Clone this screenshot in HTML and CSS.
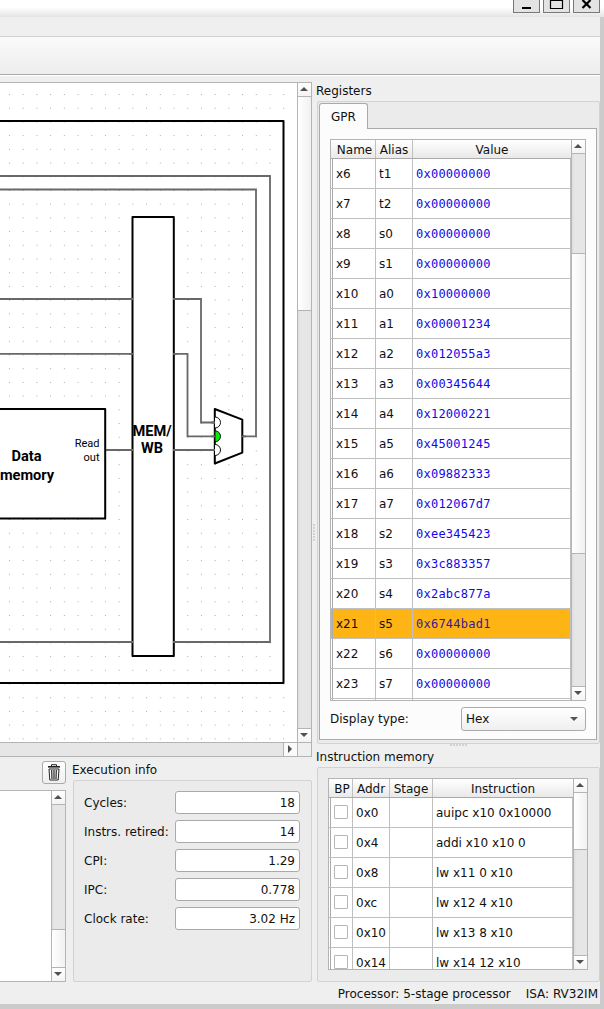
FILE: index.html
```html
<!DOCTYPE html>
<html lang="en">
<head>
<meta charset="utf-8">
<title>Processor simulator</title>
<link rel="stylesheet" href="styles.css">
</head>
<body>
<div class="window">
  <header class="titlebar">
    <span class="winbtn"><svg width="25" height="12"><path d="M8 8h9" stroke="#000" stroke-width="2"/></svg></span>
    <span class="winbtn"><svg width="25" height="12"><path d="M6.500 -1v9.500h12V-1M6 0.500h13" fill="none" stroke="#000" stroke-width="1.200"/></svg></span>
    <span class="winbtn"><svg width="25" height="12"><path d="M8.500 0l8 8M16.500 0l-8 8" stroke="#000" stroke-width="2.200"/></svg></span>
  </header>
  <div class="menubar"></div>
  <div class="toolbar"></div>
  <main class="workspace">
    <section class="left">
      <div class="canvas">
        <svg class="scheme" width="297" height="659" viewBox="0 83 297 659">
          <defs><pattern id="dots" x="9" y="94" width="13.71" height="13.71" patternUnits="userSpaceOnUse"><rect width="1" height="1" fill="#a8a8a8"/></pattern></defs>
          <rect x="0" y="92" width="285" height="650" fill="url(#dots)"/>
          <path d="M-2 121H283.500V683H-2" class="block open"/>
          <g class="wire">
            <path d="M0 176H270V642H0"/>
            <path d="M0 189.500H256V436.300H242"/>
            <path d="M0 299H201V422.500H215"/>
            <path d="M0 353.800H187.500V436.300H215"/>
            <path d="M105 450H215"/>
          </g>
          <rect x="132.500" y="217" width="41.300" height="439" class="block"/>
          <path d="M-2 409H105.200V518.500H-2" class="block"/>
          <path class="wire" d="M129 299h4M129 353.800h4M129 450h4M129 642h4M173 299h4M173 353.800h4M173 450h4M173 642h4"/>
          <path d="M214.800 409L242.300 419.600V452.600L214.800 463.500Z" class="block"/>
          <g class="port">
            <path d="M215 417a5.500 5.500 0 0 1 0 11"/>
            <path class="active" d="M215 430.800a5.500 5.500 0 0 1 0 11z"/>
            <path d="M215 444.500a5.500 5.500 0 0 1 0 11"/>
          </g>
          <path class="wire" d="M211 422.500h4M211 436.300h4M211 450h4M242 436.300h4"/>
          <g class="name">
            <text x="152" y="436">MEM/</text><text x="152" y="453">WB</text>
            <text x="26.500" y="461">Data</text><text x="27" y="480">memory</text>
          </g>
          <g class="pin"><text x="99.500" y="447">Read</text><text x="99.500" y="461">out</text></g>
        </svg>
        <div class="vscroll"><i class="btn up"></i><i class="thumb grow214"></i><i class="track"></i><i class="btn down"></i></div>
        <div class="hscroll"><i class="btn right-arrow"></i></div>
        <div class="corner"></div>
      </div>
      <div class="lower">
        <div class="console">
          <div class="trash"><svg width="14" height="17" viewBox="0 0 14 17"><path d="M4.500 2V.7h5V2" fill="none" stroke="#222"/><path d="M1 2.800h12" stroke="#222" stroke-width="1.600"/><path d="M2 5l.8 11h8.400L12 5z" fill="#fff" stroke="#222"/><path d="M4.700 6l.3 9M7 6v9M9.300 6l-.3 9" stroke="#222" stroke-width="1.200"/></svg></div>
          <div class="output"><div class="vscroll"><i class="btn up"></i><i class="track"></i><i class="thumb grow37"></i><i class="btn down"></i></div></div>
        </div>
        <div class="exec">
          <h2>Execution info</h2>
          <div class="group">
            <span>Cycles:</span><b>18</b>
            <span>Instrs. retired:</span><b>14</b>
            <span>CPI:</span><b>1.29</b>
            <span>IPC:</span><b>0.778</b>
            <span>Clock rate:</span><b>3.02 Hz</b>
          </div>
        </div>
      </div>
    </section>
    <div class="splitter"></div>
    <section class="right">
      <h2>Registers</h2>
      <div class="group regs">
        <div class="tab">GPR</div>
        <div class="pane">
          <div class="table">
            <div class="rows">
              <div class="row head"><span>Name</span><span>Alias</span><span>Value</span></div>
              <div class="row"><span>x6</span><span>t1</span><code>0x00000000</code></div>
              <div class="row"><span>x7</span><span>t2</span><code>0x00000000</code></div>
              <div class="row"><span>x8</span><span>s0</span><code>0x00000000</code></div>
              <div class="row"><span>x9</span><span>s1</span><code>0x00000000</code></div>
              <div class="row"><span>x10</span><span>a0</span><code>0x10000000</code></div>
              <div class="row"><span>x11</span><span>a1</span><code>0x00001234</code></div>
              <div class="row"><span>x12</span><span>a2</span><code>0x012055a3</code></div>
              <div class="row"><span>x13</span><span>a3</span><code>0x00345644</code></div>
              <div class="row"><span>x14</span><span>a4</span><code>0x12000221</code></div>
              <div class="row"><span>x15</span><span>a5</span><code>0x45001245</code></div>
              <div class="row"><span>x16</span><span>a6</span><code>0x09882333</code></div>
              <div class="row"><span>x17</span><span>a7</span><code>0x012067d7</code></div>
              <div class="row"><span>x18</span><span>s2</span><code>0xee345423</code></div>
              <div class="row"><span>x19</span><span>s3</span><code>0x3c883357</code></div>
              <div class="row"><span>x20</span><span>s4</span><code>0x2abc877a</code></div>
              <div class="row hot"><span>x21</span><span>s5</span><code>0x6744bad1</code></div>
              <div class="row"><span>x22</span><span>s6</span><code>0x00000000</code></div>
              <div class="row"><span>x23</span><span>s7</span><code>0x00000000</code></div>
              <div class="row"><span></span><span></span><span></span></div>
            </div>
            <div class="vscroll"><i class="btn up"></i><i class="track h100"></i><i class="thumb grow300"></i><i class="track"></i><i class="btn down"></i></div>
          </div>
          <div class="display"><span>Display type:</span><div class="combo">Hex</div></div>
        </div>
      </div>
      <div class="hsplit"></div>
      <h2>Instruction memory</h2>
      <div class="group imem">
        <div class="table">
          <div class="rows">
            <div class="row head"><span>BP</span><span>Addr</span><span>Stage</span><span>Instruction</span></div>
            <div class="row"><span><i class="check"></i></span><span>0x0</span><span></span><span>auipc x10 0x10000</span></div>
            <div class="row"><span><i class="check"></i></span><span>0x4</span><span></span><span>addi x10 x10 0</span></div>
            <div class="row"><span><i class="check"></i></span><span>0x8</span><span></span><span>lw x11 0 x10</span></div>
            <div class="row"><span><i class="check"></i></span><span>0xc</span><span></span><span>lw x12 4 x10</span></div>
            <div class="row"><span><i class="check"></i></span><span>0x10</span><span></span><span>lw x13 8 x10</span></div>
            <div class="row"><span><i class="check"></i></span><span>0x14</span><span></span><span>lw x14 12 x10</span></div>
          </div>
          <div class="vscroll"><i class="btn up"></i><i class="thumb grow57"></i><i class="track"></i><i class="btn down"></i></div>
        </div>
      </div>
    </section>
  </main>
  <footer class="status"><span>Processor: 5-stage processor</span><span>ISA: RV32IM</span></footer>
</div>
</body>
</html>
```
FILE: styles.css
```css
* { box-sizing: border-box; }
body { margin: 0; width: 604px; height: 1009px; overflow: hidden; background: #cbcbcb; color: #111; font: 12px/14px "DejaVu Sans", sans-serif; }
h2 { margin: 0; font: inherit; white-space: nowrap; }
.window { height: 1004px; display: flex; flex-direction: column; }
.titlebar { height: 17px; flex: none; display: flex; justify-content: flex-end; gap: 3px; padding-right: 4px; background: linear-gradient(#fff 0, #fefefe 45%, #e4e4e4); }
.winbtn { width: 27px; height: 13px; border: 1px solid #777; border-top: 0; border-radius: 0 0 1px 1px; background: #e3e3e3; }
.winbtn svg { display: block; }
.menubar, .toolbar, .workspace, .status { width: 600px; }
.menubar { height: 20px; flex: none; background: #efefef; border-bottom: 1px solid #d0d0d0; }
.toolbar { height: 38px; flex: none; background: linear-gradient(#fafafa, #ededed); border-bottom: 1px solid #aaa; }
.workspace { flex: 1; min-height: 0; display: flex; background: #efefef; border-top: 1px solid #fff; padding-top: 6px; }
.left { width: 312px; flex: none; }
.canvas { display: grid; grid-template: 659px 14px / 297px 15px; height: 675px; border-top: 1px solid #b4b4b4; border-bottom: 1px solid #b4b4b4; }
.scheme { display: block; background: #fff; }
.block { fill: #fff; stroke: #000; stroke-width: 2; stroke-linejoin: round; }
.open { fill: none; }
.wire, .wire path { fill: none; stroke: #686868; stroke-width: 1.8; }
.port { fill: #fff; stroke: #111; stroke-width: 1; }
.active { fill: #0e0; }
.name { font: bold 14.6px Roboto, sans-serif; text-anchor: middle; }
.pin { font: 11px Roboto, sans-serif; text-anchor: end; }
.vscroll { width: 15px; display: flex; flex-direction: column; border: solid #b4b4b4; border-width: 0 1px; background: #e4e4e4; }
.vscroll .track { flex: 1; background: linear-gradient(90deg, #dedede, #e6e6e6 20%, #e6e6e6); }
.btn { display: flex; align-items: center; justify-content: center; height: 14px; flex: none; background: linear-gradient(#fff, #f4f4f4); }
.btn::after { content: ""; border: 4px solid transparent; margin: 0 1px 1px 0; }
.up { border-bottom: 1px solid #b4b4b4; }
.up::after { border-top: 0; border-bottom-color: #505050; }
.down { border-top: 1px solid #b4b4b4; }
.down::after { border-bottom: 0; border-top-color: #505050; }
.thumb { flex: none; background: linear-gradient(90deg, #fff, #f1f1f1); border-bottom: 1px solid #b4b4b4; }
.grow214 { height: 214px; }
.grow37 { height: 38px; border-top: 1px solid #b4b4b4; border-bottom: 0; }
.grow300 { height: 301px; border-top: 1px solid #b4b4b4; }
.grow57 { height: 57px; }
.vscroll .h100 { flex: none; height: 99px; }
.hscroll { border-top: 1px solid #b4b4b4; background: #e6e6e6; display: flex; justify-content: flex-end; }
.hscroll .btn { width: 14px; height: 13px; border-left: 1px solid #b4b4b4; background: #fafafa; }
.hscroll .btn::after { border-right: 0; border-left-color: #505050; }
.corner { border: 1px solid #b4b4b4; border-bottom: 0; }
.lower { display: flex; height: 225px; }
.console { width: 66px; padding-top: 4px; }
.trash { width: 24px; height: 23px; margin-left: 42px; display: flex; align-items: center; justify-content: center; border: 1px solid #aaa; border-radius: 3px; background: linear-gradient(#fff, #efefef); }
.output { height: 192px; margin-top: 6px; background: #fff; border: solid #b4b4b4; border-width: 1px 0; display: flex; justify-content: flex-end; }
.exec { width: 240px; margin-left: 6px; padding-top: 6px; }
.group { border: 1px solid #d2d2d2; border-radius: 2px; background: #ebebeb; }
.exec .group { width: 239px; height: 202px; margin: 3px 0 0 1px; padding: 10px 11px 0 10px; display: grid; grid-template-columns: 91px 125px; grid-auto-rows: 23px; row-gap: 6px; line-height: 25px; white-space: nowrap; }
.exec b { font-weight: normal; text-align: right; padding-right: 4px; line-height: 23px; background: #fff; border: 1px solid #aaa; border-radius: 3px; }
.splitter { width: 4px; flex: none; align-self: center; height: 17px; margin-bottom: 0; background: radial-gradient(circle at 2px 1px, #b0b0b0 .6px, transparent .8px) 0 0 / 4px 3px; }
.right { width: 284px; }
.right h2 { height: 16px; line-height: 18px; }
.exec h2 { height: 14px; line-height: 14px; }
.regs { width: 283px; height: 643px; margin: 3px 0 0 1px; padding: 1px 2px 2px 1px; }
.tab { position: relative; z-index: 1; width: 49px; height: 26px; margin-bottom: -1px; padding-left: 11px; line-height: 27px; border: 1px solid #aaa; border-bottom: 0; border-radius: 3px 3px 0 0; background: #fcfcfc; }
.pane { width: 278px; height: 612px; padding: 10px; background: #fcfcfc; border: 1px solid #aaa; }
.table { display: flex; border: 1px solid #b4b4b4; background: #fff; overflow: hidden; }
.table .vscroll { border-right: 0; width: 14px; }
.regs .table { width: 256px; height: 562px; }
.row { display: grid; height: 30px; line-height: 31px; padding-left: 1px; white-space: pre; border-bottom: 1px solid #c0c0c0; }
.row > * { border-right: 1px solid #c0c0c0; padding-left: 3px; height: 29px; }
.row > :first-child { border-left: 1px solid #aaa; }
.regs .row { width: 240px; grid-template-columns: 44px 37px 158px; }
.regs code { color: #1208e8; font: 12px/31px "DejaVu Sans Mono", monospace; letter-spacing: .24px; }
.row.head { height: 19px; line-height: 21px; text-align: center; background: linear-gradient(#fff, #e9e9e9); border-bottom-color: #aaa; }
.head > * { height: 18px; padding: 0; }
.head > :last-child, .row.head > :first-child { border-left: 0; }
.head > :last-child { border-right: 0; }
.row.head > :first-child { padding-left: 2px; }
.hot { background: #ffb416; }
.regs .hot code { color: #3b1896; }
.display { display: flex; justify-content: space-between; width: 256px; margin-top: 6px; line-height: 25px; }
.combo { display: flex; align-items: center; justify-content: space-between; width: 125px; height: 24px; padding: 0 7px 0 4px; border: 1px solid #aaa; border-radius: 3px; background: linear-gradient(#fff, #efefef); }
.combo::after { content: ""; border: 4px solid transparent; border-top-color: #555; border-bottom: 0; }
.hsplit { height: 4px; width: 17px; margin-left: 134px; background: radial-gradient(circle at 1px 1px, #b0b0b0 .6px, transparent .8px) 0 0 / 3px 4px; }
.imem { width: 283px; height: 215px; margin: 3px 0 0 1px; padding: 10px; }
.imem .table { width: 260px; height: 192px; }
.imem .rows { width: 244px; flex: none; }
.imem .row { grid-template-columns: 23px 37px 43px 140px; }
.check { display: block; width: 14px; height: 14px; margin-top: 7px; border: 1px solid #b5b5b5; background: #fff; border-radius: 1px; }
.status { height: 22px; flex: none; display: flex; justify-content: flex-end; gap: 15px; padding: 5px 2px 0 0; background: #efefef; }
```
